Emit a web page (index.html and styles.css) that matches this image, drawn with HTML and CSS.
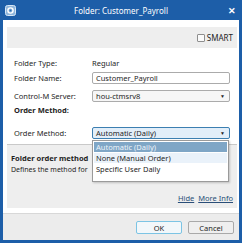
FILE: index.html
```html
<!DOCTYPE html>
<html lang="en">
<head>
    <meta charset="UTF-8">
    <title>Folder: Customer_Payroll</title>
    <link rel="stylesheet" href="styles.css">
</head>
<body>
    <div class="window">
        <!-- Title Bar -->
        <div class="titlebar">
            <svg class="app-icon" width="11" height="11" viewBox="0 0 11 11">
                <rect x="0.5" y="0.5" width="10" height="10" rx="2" fill="#8fb6dc" stroke="#d6e6f5"/>
                <circle cx="5.5" cy="5.5" r="2.6" fill="none" stroke="#ffffff" stroke-width="1.4"/>
                <circle cx="5.5" cy="5.5" r="1" fill="#2a6cb0"/>
            </svg>
            <span class="title">Folder: Customer_Payroll</span>
            <span class="close">&#x2715;</span>
        </div>

        <div class="client">
            <!-- SMART strip -->
            <div class="smart-strip">
                <label class="smart"><span class="checkbox"></span>SMART</label>
            </div>

            <!-- Properties -->
            <div class="form">
                <div class="row">
                    <span class="label">Folder Type:</span>
                    <span class="value">Regular</span>
                </div>
                <div class="row">
                    <span class="label">Folder Name:</span>
                    <div class="field">Customer_Payroll</div>
                </div>
                <div class="row">
                    <span class="label">Control-M Server:</span>
                    <div class="field select">hou-ctmsrv8<span class="arrow">&#9660;</span></div>
                </div>
                <div class="row section">Order Method:</div>
                <div class="row method-row">
                    <span class="label">Order Method:</span>
                    <div class="field select active">Automatic (Daily)<span class="arrow">&#9660;</span></div>
                    <ul class="dropdown">
                        <li class="selected">Automatic (Daily)</li>
                        <li class="hover">None (Manual Order)</li>
                        <li>Specific User Daily</li>
                    </ul>
                </div>
            </div>

            <!-- Description -->
            <div class="desc">
                <div class="desc-title">Folder order method</div>
                <div class="desc-text">Defines the method for</div>
                <div class="links"><a href="#">Hide</a><a href="#">More Info</a></div>
            </div>

            <!-- Footer -->
            <div class="footer">
                <button class="btn default">OK</button>
                <button class="btn">Cancel</button>
            </div>
        </div>
    </div>
</body>
</html>
```

FILE: styles.css
```css
/* General Reset */
* {
    box-sizing: border-box;
    margin: 0;
    padding: 0;
}

body {
    font-family: "Noto Sans", "Open Sans", sans-serif;
    font-size: 7.5px;
    color: #1e1e1e;
    background-color: #ffffff;
}

/* Window frame */
.window {
    width: 242px;
    height: 243px;
    background-color: #1d5ea8;
    padding: 0 3px 3px 3px;
    display: flex;
    flex-direction: column;
}

.titlebar {
    height: 20px;
    display: flex;
    align-items: center;
    color: #ffffff;
}

.app-icon {
    margin-left: 2px;
}

.title {
    flex: 1;
    text-align: center;
    font-size: 8px;
    margin-left: -2px;
}

.close {
    font-size: 9px;
    font-weight: bold;
    margin-right: 3px;
}

/* Client area */
.client {
    flex: 1;
    background-color: #ffffff;
    display: flex;
    flex-direction: column;
    padding-top: 7px;
}

.smart-strip {
    height: 21px;
    margin: 0 2px 0 4px;
    background-color: #eeeeee;
    display: flex;
    justify-content: flex-end;
    align-items: center;
    padding-right: 4px;
}

.smart {
    display: flex;
    align-items: center;
    gap: 2px;
    font-size: 8px;
}

.checkbox {
    width: 8px;
    height: 8px;
    border: 1px solid #8e8e8e;
    background-color: #fafafa;
    border-radius: 1px;
}

/* Form */
.form {
    margin: 0 2px 0 4px;
    padding: 9px 0 5px 0;
    display: flex;
    flex-direction: column;
}

.row {
    height: 12px;
    display: flex;
    align-items: center;
    position: relative;
}

.row + .row {
    margin-top: 3px;
}

.row:nth-child(3) {
    margin-top: 6px;
}

.row.section {
    margin-top: 2px;
    padding-left: 7px;
    font-weight: bold;
}

.row.method-row {
    margin-top: 11px;
}

.label {
    width: 85px;
    padding-left: 7px;
}

.field {
    width: 138px;
    height: 12px;
    border: 1px solid #ababab;
    border-radius: 2px;
    padding-left: 3px;
    display: flex;
    align-items: center;
    background-color: #ffffff;
}

.select {
    justify-content: space-between;
    background-color: #f6f6f6;
}

.select .arrow {
    font-size: 5px;
    margin-right: 4px;
}

.select.active {
    border-color: #3c7fb1;
    background-color: #e2eef9;
}

.dropdown {
    list-style: none;
    position: absolute;
    left: 85px;
    top: 13px;
    width: 137px;
    height: 42px;
    background-color: #ffffff;
    border: 1px solid #9a9a9a;
    box-shadow: 1px 1px 2px rgba(0, 0, 0, 0.2);
    padding: 1px;
    z-index: 10;
}

.dropdown li {
    height: 10px;
    line-height: 10px;
    padding-left: 2px;
    margin-bottom: 1px;
}

.dropdown li.selected {
    background-color: #7fa6c6;
    color: #eef4fa;
}

.dropdown li.hover {
    background-color: #eaf2fa;
}

/* Description panel */
.desc {
    height: 64px;
    margin: 0 2px 0 4px;
    background-color: #eeeeee;
    border-top: 1px solid #c9c9c9;
    padding: 8px 4px 0 4px;
    display: flex;
    flex-direction: column;
}

.desc-title {
    font-weight: bold;
    font-size: 7.5px;
    line-height: 11px;
}

.desc-text {
    font-size: 7px;
    line-height: 11px;
}

.links {
    margin-top: 18px;
    display: flex;
    justify-content: flex-end;
    gap: 4px;
}

.links a {
    color: #2a4e78;
}

/* Footer */
.footer {
    margin-top: 5px;
    flex: 1;
    background-color: #ececec;
    border-top: 1px solid #d8d8d8;
    display: flex;
    justify-content: flex-end;
    align-items: flex-start;
    gap: 6px;
    padding: 7px 5px 0 0;
}

.btn {
    width: 46px;
    height: 13px;
    font-family: inherit;
    font-size: 7.5px;
    color: #1e1e1e;
    background-color: #efefef;
    border: 1px solid #a9a9a9;
    border-radius: 2px;
}

.btn.default {
    border-color: #7cc4e4;
    background-color: #f2f7fa;
}
```
